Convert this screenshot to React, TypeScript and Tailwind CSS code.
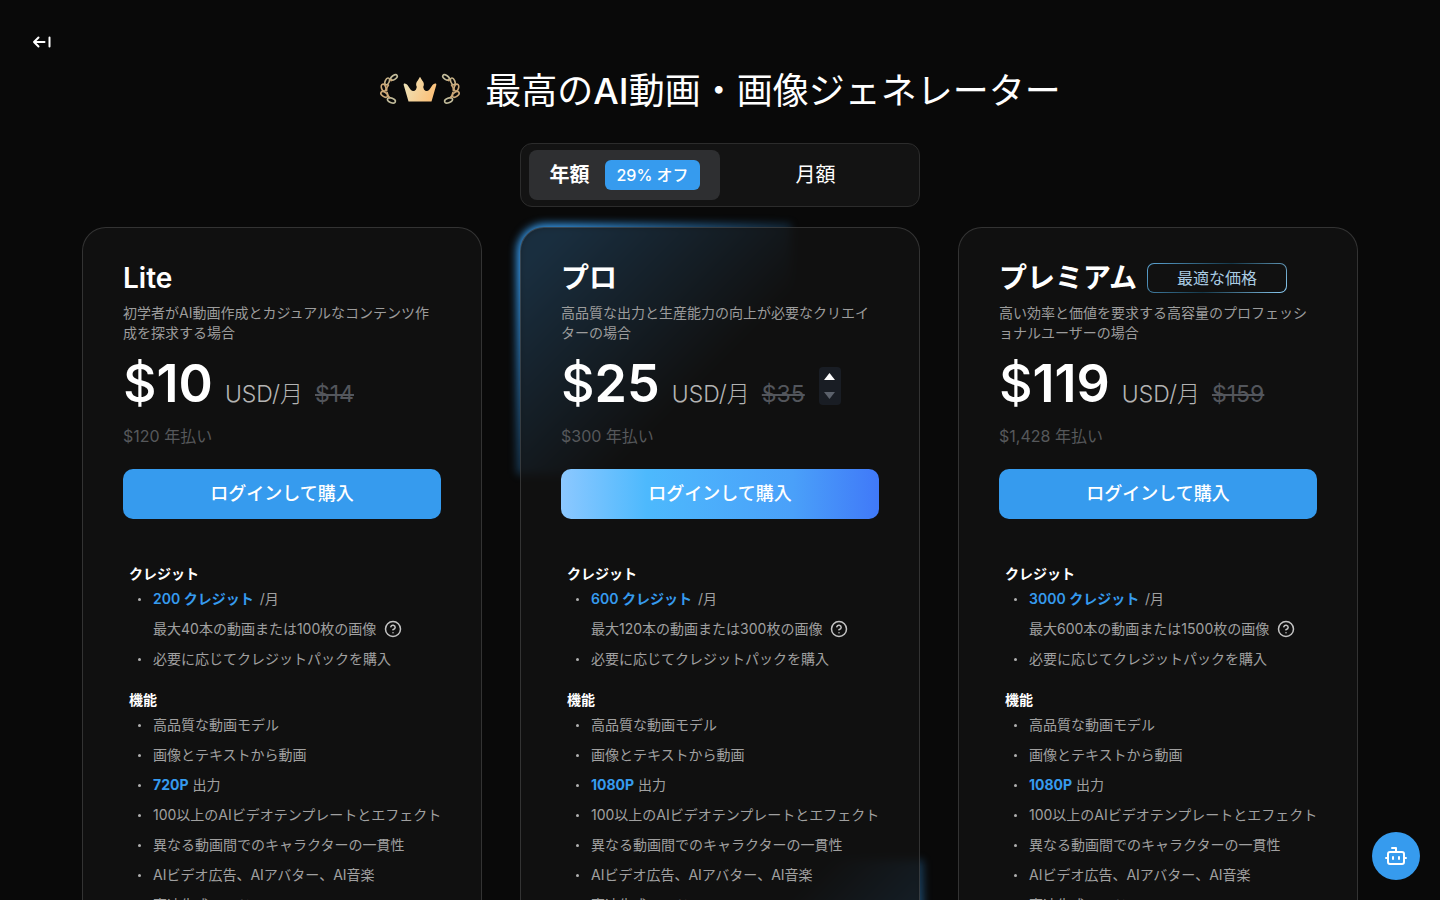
import { useState } from "react";
import { Bot, CircleHelp } from "lucide-react";
import clsx from "clsx";

const plans = [
  {
    id: "lite",
    name: "Lite",
    description: "初学者がAI動画作成とカジュアルなコンテンツ作成を探求する場合",
    price: "10",
    oldPrice: "$14",
    yearly: "$120 年払い",
    credits: "200 クレジット",
    amount: "最大40本の動画または100枚の画像",
    quality: "720P",
  },
  {
    id: "pro",
    name: "プロ",
    description: "高品質な出力と生産能力の向上が必要なクリエイターの場合",
    price: "25",
    oldPrice: "$35",
    yearly: "$300 年払い",
    credits: "600 クレジット",
    amount: "最大120本の動画または300枚の画像",
    quality: "1080P",
    featured: true,
  },
  {
    id: "premium",
    name: "プレミアム",
    badge: "最適な価格",
    description: "高い効率と価値を要求する高容量のプロフェッショナルユーザーの場合",
    price: "119",
    oldPrice: "$159",
    yearly: "$1,428 年払い",
    credits: "3000 クレジット",
    amount: "最大600本の動画または1500枚の画像",
    quality: "1080P",
  },
];

type Plan = (typeof plans)[number];

function Laurel() {
  return (
    <g fill="none" stroke="#cda878" strokeWidth="1.6">
      <ellipse cx="15" cy="3.4" rx="3.7" ry="2" transform="rotate(-34 15 3.4)" stroke="#c3bd9c" />
      <ellipse cx="8.2" cy="7.4" rx="3.6" ry="2" transform="rotate(-66 8.2 7.4)" stroke="#c6b187" />
      <ellipse cx="4.6" cy="13.6" rx="3.6" ry="2.2" transform="rotate(72 4.6 13.6)" />
      <ellipse cx="5.2" cy="20.4" rx="3.800" ry="2.2" transform="rotate(36 5.2 20.4)" />
      <ellipse cx="12.400" cy="26.400" rx="4.200" ry="2.200" transform="rotate(22 12.400 26.400)" stroke="#c3bd9c" />
      <path d="M9.800 10.500c-1.800 2-2.600 4-2.200 7M8 18c.4 2.600 1.400 4.600 3 6.400M11.500 7l2-1.500" />
    </g>
  );
}

function CrownLogo() {
  return (
    <svg width="82" height="32" viewBox="0 1 82 32" className="overflow-visible" aria-hidden="true">
      <defs>
        <linearGradient id="crown" x1="0" y1="0" x2="1" y2="0.3">
          <stop offset="0" stopColor="#ece5bd" />
          <stop offset="1" stopColor="#fbc27c" />
        </linearGradient>
      </defs>
      <Laurel />
      <g transform="translate(82 0) scale(-1 1)">
        <Laurel />
      </g>
      <path
        fill="url(#crown)"
        d="M25 9.500Q27 9 28.500 11l3 4.500q3 3 5.500 0l.8-2.500Q36 9.500 38.800 6.500L41 2.800l2.200 3.700Q46 9.500 44.200 13l.8 2.500q2.500 3 5.500 0l3-4.500Q55 9 57 9.500q.8 1 0 2.500L52.500 27.500H29.500L25 12q-.8-1.500 0-2.500Z"
      />
    </svg>
  );
}

function PriceStepper() {
  return (
    <div className="mt-1 ml-3.5 flex h-[38px] w-[22px] flex-col overflow-hidden rounded bg-[#191d24]">
      <button type="button" aria-label="増やす" className="flex flex-1 items-center justify-center">
        <svg width="11" height="7" viewBox="0 0 11 7" className="fill-white">
          <path d="M5.500 0 11 7H0Z" />
        </svg>
      </button>
      <button type="button" aria-label="減らす" className="flex flex-1 items-center justify-center">
        <svg width="11" height="7" viewBox="0 0 11 7" className="fill-[#5b616b]">
          <path d="M0 0h11L5.500 7Z" />
        </svg>
      </button>
    </div>
  );
}

function Item({ children, bullet = true }: { children: React.ReactNode; bullet?: boolean }) {
  return (
    <li className="flex h-[30px] items-center gap-1 whitespace-nowrap">
      <span className="flex w-5 shrink-0 justify-center">
        {bullet && <span className="size-[3px] rounded-full bg-[#b0b0b0]" />}
      </span>
      {children}
    </li>
  );
}

function PlanCard({ plan }: { plan: Plan }) {
  return (
    <div className="relative">
      {plan.featured && (
        <>
          <div className="absolute -top-[3px] -left-[3px] h-[250px] w-[274px] rounded-tl-[28px] bg-linear-135 from-[#369bee] from-10% to-[#369bee]/0 to-65% blur-[4px]" />
          <div className="absolute -right-[3px] -bottom-[3px] h-[250px] w-[274px] rounded-br-[28px] bg-linear-315 from-[#369bee] from-10% to-[#369bee]/0 to-65% blur-[4px]" />
        </>
      )}
      <section className="relative min-h-[880px] rounded-3xl border border-white/15 bg-[#131313]/80 px-10 pt-8">
        <div className="flex h-9 items-center gap-2.5">
          <h2 className="text-[28px] font-semibold whitespace-nowrap text-white">{plan.name}</h2>
          {plan.badge && (
            <span className="h-[30px] w-[140px] rounded-[7px] bg-linear-135 from-[#5fa8d8] via-[#14384a] to-[#8fd0f8] p-px">
              <span className="flex h-full items-center justify-center rounded-md bg-[#111111] text-base font-normal text-[#a9cbe2]">
                {plan.badge}
              </span>
            </span>
          )}
        </div>
        <p className="mt-[7px] min-h-10 text-sm leading-5 text-[#9c9c9c]">{plan.description}</p>

        <div className="mt-[9px] flex h-16 items-center">
          <div className="flex items-baseline">
            <span className="text-[52px] leading-[64px] font-semibold text-white">
              <span className="font-medium">$</span>
              {plan.price}
            </span>
            <span className="ml-3 text-[23px] font-light text-[#b4b4b4]">USD/月</span>
            <del className="ml-3 text-[23px] text-[#53565c]">{plan.oldPrice}</del>
          </div>
          {plan.featured && <PriceStepper />}
        </div>
        <p className="mt-2 text-base leading-6 text-[#56585b]">{plan.yearly}</p>

        <button
          type="button"
          className={clsx(
            "mt-[21px] h-[50px] w-full rounded-[10px] text-lg font-medium text-white",
            plan.featured
              ? "bg-[linear-gradient(90deg,#8cc8ff_0%,#4db9fd_27%,#4aa0f9_73%,#4079f8_100%)]"
              : "bg-[#369bee]"
          )}
        >
          ログインして購入
        </button>

        <div className="mt-[45px] pl-1.5 text-sm leading-5 text-[#a0a0a0]">
          <h3 className="font-semibold text-white">クレジット</h3>
          <ul>
            <Item>
              <span>
                <strong className="mr-0.5 font-semibold text-[#369bee]">{plan.credits}</strong> /月
              </span>
            </Item>
            <Item bullet={false}>
              {plan.amount}
              <CircleHelp size={18} className="ml-1 text-[#c4c4c4]" />
            </Item>
            <Item>必要に応じてクレジットパックを購入</Item>
          </ul>
          <h3 className="mt-4 font-semibold text-white">機能</h3>
          <ul>
            <Item>高品質な動画モデル</Item>
            <Item>画像とテキストから動画</Item>
            <Item>
              <span>
                <strong className="font-bold text-[#369bee]">{plan.quality}</strong> 出力
              </span>
            </Item>
            <Item>100以上のAIビデオテンプレートとエフェクト</Item>
            <Item>異なる動画間でのキャラクターの一貫性</Item>
            <Item>AIビデオ広告、AIアバター、AI音楽</Item>
            <Item>高速生成モード</Item>
          </ul>
        </div>
      </section>
    </div>
  );
}

export default function App() {
  const [yearly, setYearly] = useState(true);

  return (
    <div lang="ja" className="min-h-screen bg-[#090909] pt-8 pb-16 font-['Inter','Noto_Sans_CJK_JP',sans-serif] text-white">
      <header className="px-8">
        <a href="#" aria-label="戻る" className="block size-5">
          <svg width="20" height="20" viewBox="0 0 20 20" fill="none" stroke="currentColor" strokeWidth="2" strokeLinecap="round" strokeLinejoin="round">
            <path d="M6.500 5.500 2 10l4.500 4.500M2 10h10.500M17.500 5.500v9" />
          </svg>
        </a>
        <div className="mt-3 flex h-[54px] items-center justify-center gap-6">
          <CrownLogo />
          <h1 className="text-4xl font-normal whitespace-nowrap">
            最高の<span className="font-medium">AI</span>動画・画像ジェネレーター
          </h1>
        </div>
      </header>

      <div className="mx-auto mt-[25px] grid h-16 max-w-[400px] grid-cols-2 rounded-xl border border-[#2c2c2c] bg-[#131313] px-2 py-1.5">
        <button
          type="button"
          aria-pressed={yearly}
          onClick={() => setYearly(true)}
          className={clsx("flex items-center justify-center gap-4 rounded-lg text-xl", yearly ? "bg-[#2e2f31] font-semibold" : "font-normal")}
        >
          年額
          <span className="flex h-[30px] items-center rounded-md bg-[#369bee] px-[11px] text-base font-medium">29% オフ</span>
        </button>
        <button
          type="button"
          aria-pressed={!yearly}
          onClick={() => setYearly(false)}
          className={clsx("rounded-lg text-xl", yearly ? "font-normal" : "bg-[#2e2f31] font-semibold")}
        >
          月額
        </button>
      </div>

      <main className="mx-auto mt-5 grid max-w-[1276px] grid-cols-3 gap-[38px]">
        {plans.map((plan) => (
          <PlanCard key={plan.id} plan={plan} />
        ))}
      </main>

      <button
        type="button"
        aria-label="チャットサポート"
        className="fixed right-5 bottom-5 flex size-12 items-center justify-center rounded-full bg-[#369bee]"
      >
        <Bot size={24} />
      </button>
    </div>
  );
}
